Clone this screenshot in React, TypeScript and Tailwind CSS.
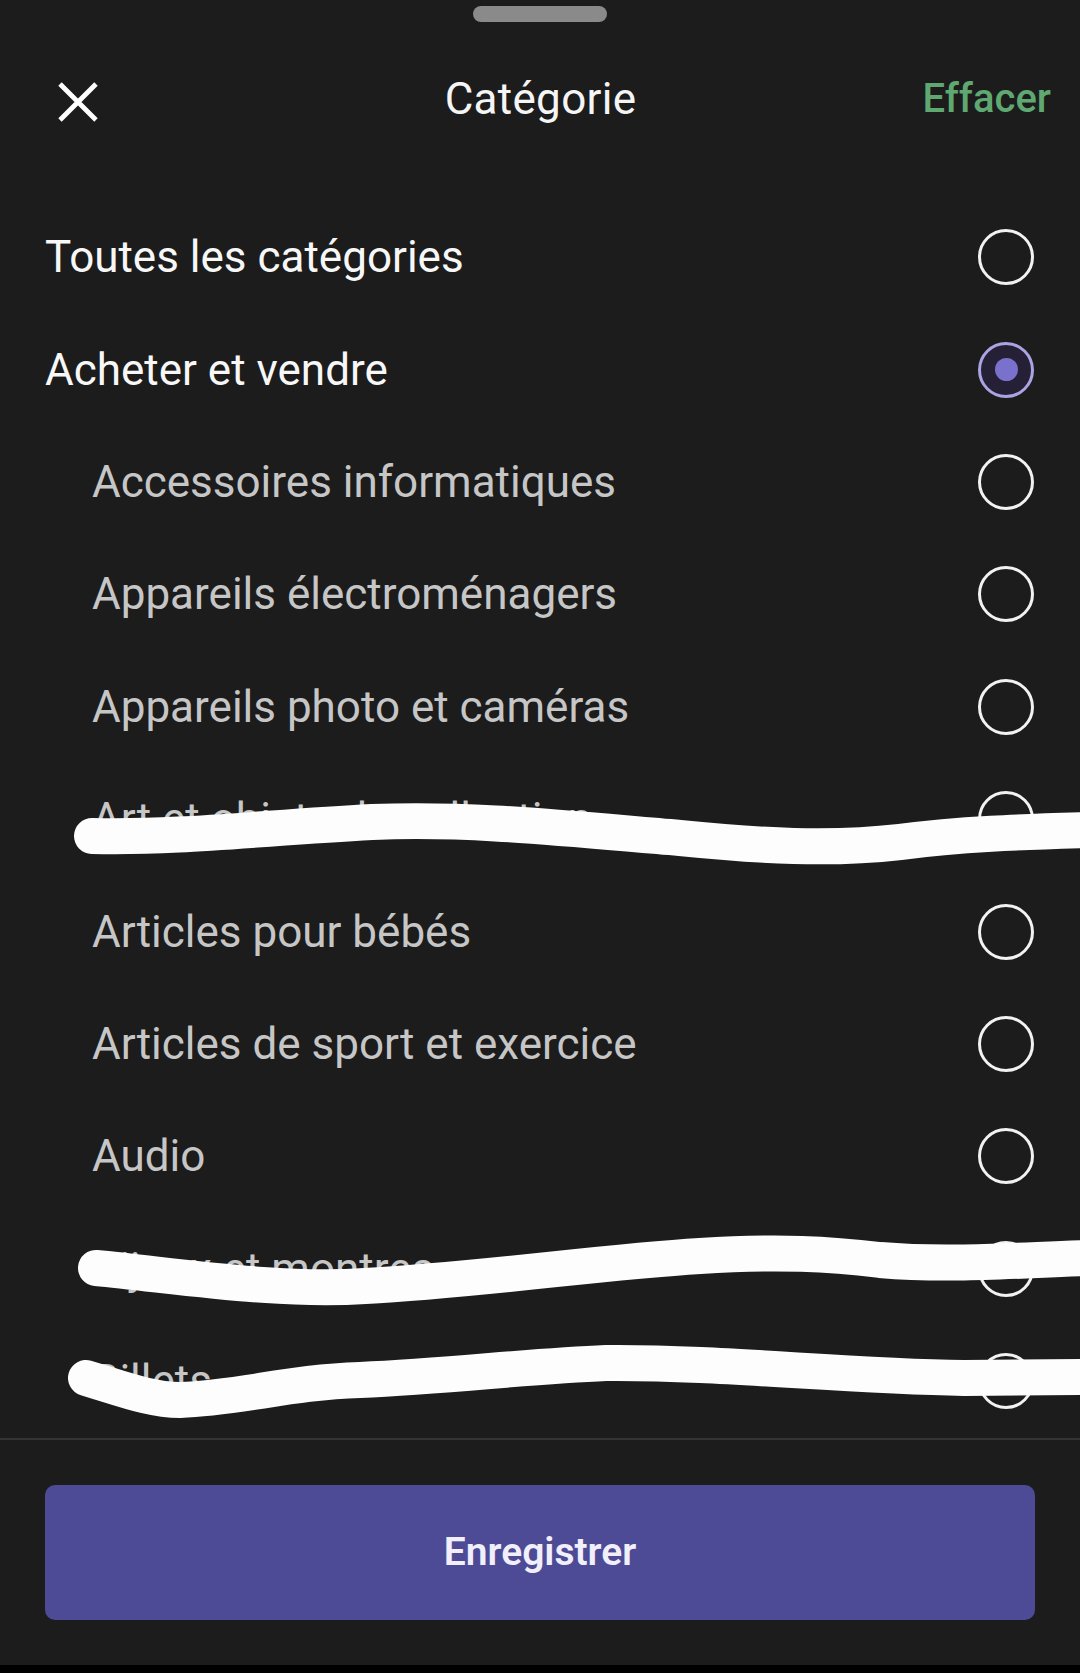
import React from 'react';

const items = [
  { label: 'Toutes les catégories', sub: false, selected: false },
  { label: 'Acheter et vendre', sub: false, selected: true },
  { label: 'Accessoires informatiques', sub: true, selected: false },
  { label: 'Appareils électroménagers', sub: true, selected: false },
  { label: 'Appareils photo et caméras', sub: true, selected: false },
  { label: 'Art et objets de collection', sub: true, selected: false },
  { label: 'Articles pour bébés', sub: true, selected: false },
  { label: 'Articles de sport et exercice', sub: true, selected: false },
  { label: 'Audio', sub: true, selected: false },
  { label: 'Bijoux et montres', sub: true, selected: false },
  { label: 'Billets', sub: true, selected: false },
];

function Radio({ selected }: { selected: boolean }) {
  if (selected) {
    return (
      <div className="w-[56px] h-[56px] rounded-full border-[3px] border-[#aaa4e2] bg-[#262036] flex items-center justify-center">
        <div className="w-[23px] h-[23px] rounded-full bg-[#7a71cc]" />
      </div>
    );
  }
  return <div className="w-[56px] h-[56px] rounded-full border-[3px] border-[#f2f2f2]" />;
}

export default function App() {
  return (
    <div
      className="w-[1080px] h-[1673px] bg-black flex flex-col"
      style={{ fontFamily: 'Roboto, "Open Sans", sans-serif' }}
    >
      <div className="relative h-[1665px] bg-[#1c1c1c] flex flex-col">
        {/* grab handle */}
        <div className="flex justify-center pt-[6px]">
          <div className="w-[134px] h-[16px] rounded-full bg-[#8a8a8a]" />
        </div>

        {/* header */}
        <div className="h-[160px] grid grid-cols-[1fr_auto_1fr] items-center pl-[58px] pr-[29px]">
          <svg width="40" height="40" viewBox="0 0 40 40" className="text-white">
            <path d="M2 2 L38 38 M38 2 L2 38" stroke="currentColor" strokeWidth="4.8" strokeLinecap="butt" />
          </svg>
          <div className="text-[44px] text-[#f5f5f5] tracking-[0.3px] -translate-x-[14px] -translate-y-[3px]">
            Catégorie
          </div>
          <button className="justify-self-end text-[40px] text-[#5fa872] font-medium -translate-y-[3px]">
            Effacer
          </button>
        </div>

        {/* list */}
        <div className="flex-1 overflow-hidden pt-[19px]">
          {items.map((item) => (
            <div
              key={item.label}
              className={`h-[112.4px] flex items-center justify-between pr-[46px] ${item.sub ? 'pl-[92px]' : 'pl-[45px]'}`}
            >
              <span className={`text-[44px] ${item.sub ? 'text-[#c6c6c6]' : 'text-[#f7f7f7]'}`}>
                {item.label}
              </span>
              <Radio selected={item.selected} />
            </div>
          ))}
        </div>

        {/* footer */}
        <div className="border-t-[2px] border-[#343434] pt-[45px] pb-[45px] px-[45px]">
          <button className="w-full h-[135px] rounded-[10px] bg-[#4d4a96] text-[39px] font-semibold text-[#f1eff9]">
            Enregistrer
          </button>
        </div>

        {/* hand-drawn redaction strokes over the list */}
        <svg
          className="absolute inset-0 pointer-events-none"
          width="1080"
          height="1665"
          viewBox="0 0 1080 1665"
        >
          <g fill="none" stroke="#fdfdfd" strokeWidth="36" strokeLinecap="round" strokeLinejoin="round">
            <path d="M92 836 C180 838 260 828 372 822 C470 818 560 828 680 838 C760 846 830 850 900 842 C960 834 1020 832 1090 830" />
            <path d="M96 1268 C180 1276 280 1292 365 1286 C480 1280 600 1262 700 1256 C780 1251 830 1254 880 1260 C950 1266 1020 1260 1090 1258" />
            <path d="M86 1378 C120 1388 150 1400 180 1400 C240 1398 290 1382 360 1380 C450 1376 530 1366 606 1363 C720 1362 840 1376 964 1378 C1010 1378 1050 1377 1090 1377" />
          </g>
        </svg>
      </div>
    </div>
  );
}
